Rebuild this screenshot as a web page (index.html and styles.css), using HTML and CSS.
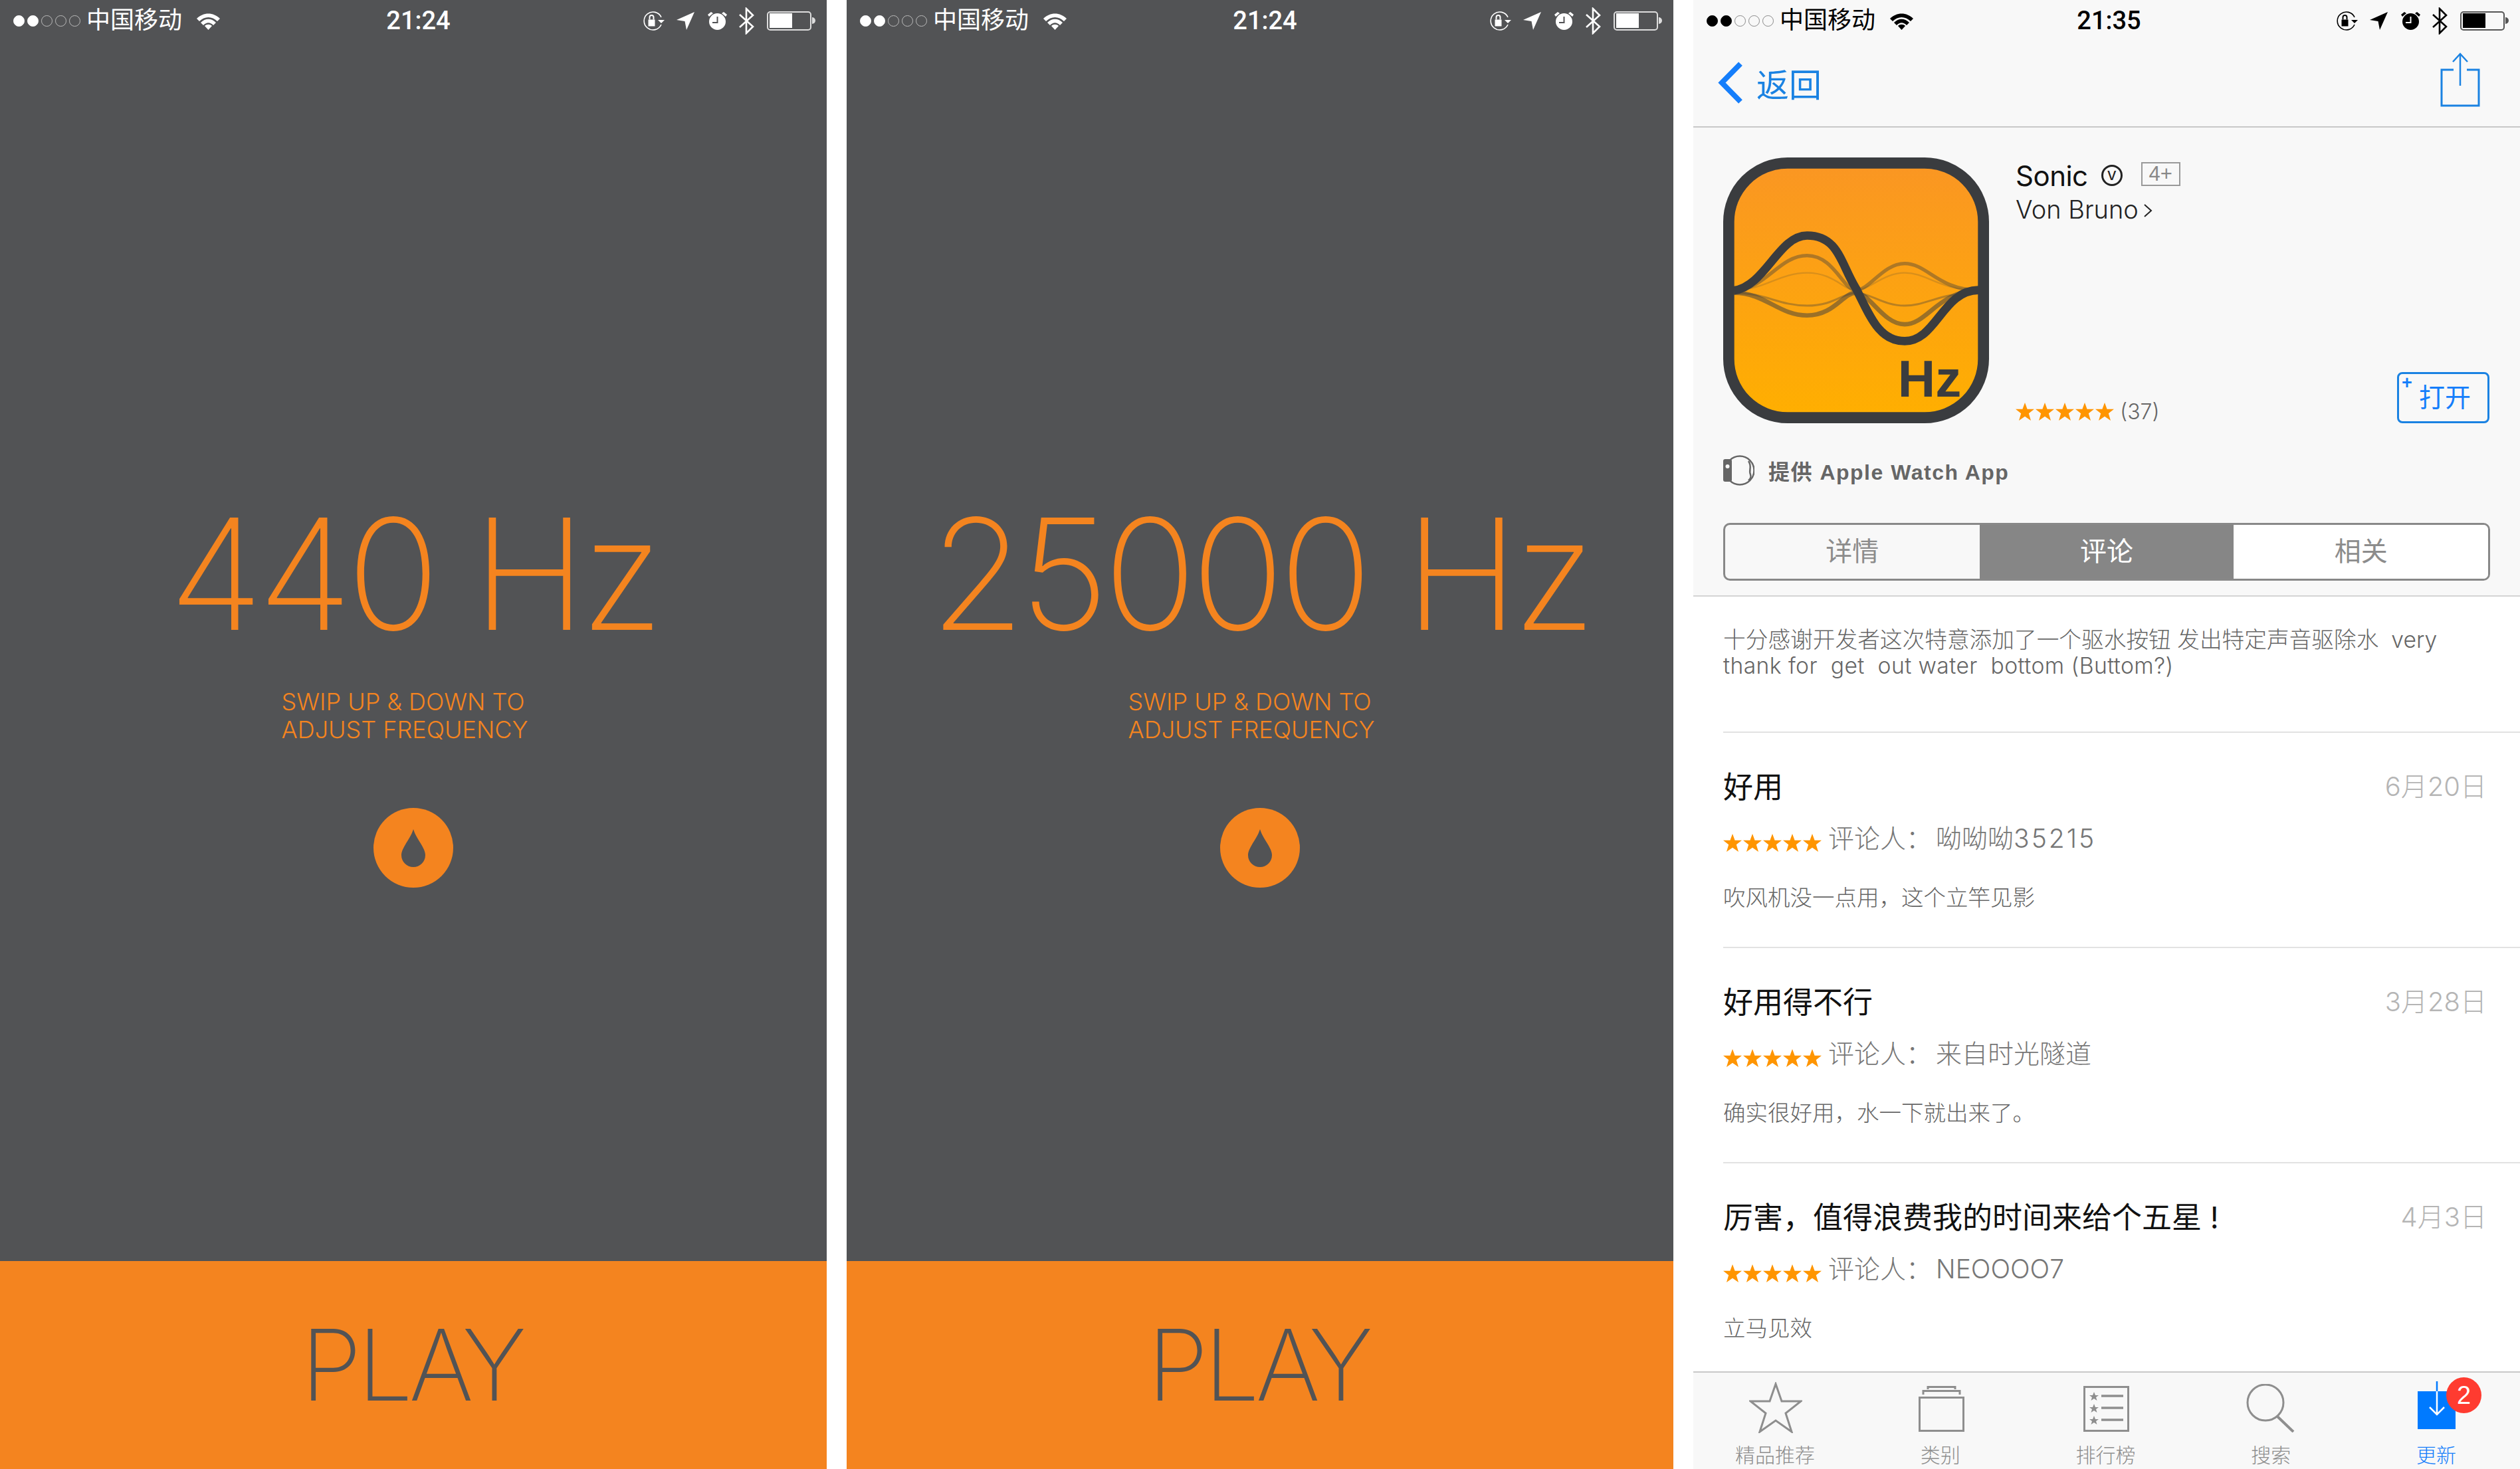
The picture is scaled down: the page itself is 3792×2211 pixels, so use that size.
FILE: index.html
```html
<!DOCTYPE html>
<html lang="zh">
<head>
<meta charset="utf-8">
<title>Sonic</title>
<link rel="stylesheet" href="styles.css">
</head>
<body>
<svg class="sprite" aria-hidden="true">
  <symbol id="wifi" viewBox="0 0 39 27">
    <path class="wifi-arc" d="M2 10C12 0 27 0 37 10L33 14C25 6 14 6 6 14Z"/>
    <path class="wifi-arc" d="M8 16C15 9 24 9 31 16L27 20C22 15 17 15 12 20Z"/>
    <path d="M14 21C17 18 22 18 25 21L19.500 27Z"/>
  </symbol>
  <symbol id="rot" viewBox="0 0 34 30">
    <path d="M29 21A13.500 13.500 0 1 1 29 10" fill="none" stroke="currentColor" stroke-width="1.600"/>
    <path d="M9.500 13.500h10v10h-10z"/>
    <path d="M11.500 13.500V10a3 3 0 0 1 6 0v3.500" fill="none" stroke="currentColor" stroke-width="2"/>
    <path d="M24 14h10l-5 5z"/>
  </symbol>
  <symbol id="loc" viewBox="0 0 27 27">
    <path d="M27 0L15 27L12.500 14L0 12Z"/>
  </symbol>
  <symbol id="alarm" viewBox="0 0 29 27">
    <path fill-rule="evenodd" d="M14.500 2a12.500 12.500 0 1 1 0 25a12.500 12.500 0 0 1 0-25ZM13.500 7v8H7v2h8.500V7Z"/>
    <path d="M0 4L5 0L8 2L2 7ZM29 4L24 0L21 2L27 7Z"/>
  </symbol>
  <symbol id="bt" viewBox="0 0 23 41">
    <path d="M1 11L21 29L11 39V2L21 12L1 30" fill="none" stroke="currentColor" stroke-width="2.600"/>
  </symbol>
  <symbol id="star" viewBox="0 0 28 28">
    <path d="M14 0L17.600 9.700H28L19.800 16.300L23 27L14 20.800L5 27L8.200 16.300L0 9.700H10.400Z"/>
  </symbol>
</svg>

<main class="screens">
  <section class="screen sonic">
    <header class="status">
      <div class="status-left">
        <span class="signal"><i class="on"></i><i class="on"></i><i></i><i></i><i></i></span>
        <span class="carrier">中国移动</span>
        <svg class="ic-wifi"><use href="#wifi"/></svg>
      </div>
      <div class="clock">21:24</div>
      <div class="status-right">
        <svg class="ic-rot"><use href="#rot"/></svg>
        <svg class="ic-loc"><use href="#loc"/></svg>
        <svg class="ic-alarm"><use href="#alarm"/></svg>
        <svg class="ic-bt"><use href="#bt"/></svg>
        <span class="battery"><span class="level"></span></span><span class="nub"></span>
      </div>
    </header>
    <div class="sonic-body">
      <div class="freq">440 Hz</div>
      <p class="hint">SWIP UP &amp; DOWN TO<br>ADJUST FREQUENCY</p>
      <div class="drop-btn"><svg viewBox="0 0 36 57"><path d="M18 0C22 14 36 28 36 39A18 18 0 0 1 0 39C0 28 14 14 18 0Z"/></svg></div>
    </div>
    <div class="play">PLAY</div>
  </section>

  <section class="screen sonic">
    <header class="status">
      <div class="status-left">
        <span class="signal"><i class="on"></i><i class="on"></i><i></i><i></i><i></i></span>
        <span class="carrier">中国移动</span>
        <svg class="ic-wifi"><use href="#wifi"/></svg>
      </div>
      <div class="clock">21:24</div>
      <div class="status-right">
        <svg class="ic-rot"><use href="#rot"/></svg>
        <svg class="ic-loc"><use href="#loc"/></svg>
        <svg class="ic-alarm"><use href="#alarm"/></svg>
        <svg class="ic-bt"><use href="#bt"/></svg>
        <span class="battery"><span class="level"></span></span><span class="nub"></span>
      </div>
    </header>
    <div class="sonic-body">
      <div class="freq">25000 Hz</div>
      <p class="hint">SWIP UP &amp; DOWN TO<br>ADJUST FREQUENCY</p>
      <div class="drop-btn"><svg viewBox="0 0 36 57"><path d="M18 0C22 14 36 28 36 39A18 18 0 0 1 0 39C0 28 14 14 18 0Z"/></svg></div>
    </div>
    <div class="play">PLAY</div>
  </section>

  <section class="screen store">
    <div class="store-head">
      <header class="status dark">
        <div class="status-left">
          <span class="signal"><i class="on"></i><i class="on"></i><i></i><i></i><i></i></span>
          <span class="carrier">中国移动</span>
          <svg class="ic-wifi"><use href="#wifi"/></svg>
        </div>
        <div class="clock">21:35</div>
        <div class="status-right">
          <svg class="ic-rot"><use href="#rot"/></svg>
          <svg class="ic-loc"><use href="#loc"/></svg>
          <svg class="ic-alarm"><use href="#alarm"/></svg>
          <svg class="ic-bt"><use href="#bt"/></svg>
          <span class="battery"><span class="level"></span></span><span class="nub"></span>
        </div>
      </header>
      <nav class="navbar">
        <div class="back">
          <svg class="back-chev" viewBox="0 0 40 63"><path d="M34 3L6 31.500L34 60" fill="none" stroke="currentColor" stroke-width="8"/></svg>
          <span>返回</span>
        </div>
        <svg class="share" viewBox="0 0 60 82"><path d="M20 26H2V80H58V26H40" fill="none" stroke="currentColor" stroke-width="3"/><path d="M30 50V2M19 14L30 2L41 14" fill="none" stroke="currentColor" stroke-width="2.500"/></svg>
      </nav>
      <div class="app-info">
        <svg class="app-icon" viewBox="0 0 1198 1198">
          <defs><linearGradient id="ag" x1="0" y1="0" x2="0" y2="1"><stop offset="0" stop-color="#fa9623"/><stop offset="1" stop-color="#ffaf00"/></linearGradient>
          <clipPath id="ac"><rect x="25" y="25" width="1148" height="1148" rx="265"/></clipPath></defs>
          <rect x="25" y="25" width="1148" height="1148" rx="265" fill="url(#ag)" stroke="#3a3c3f" stroke-width="50"/>
          <g fill="none" stroke="#3a3c3f" clip-path="url(#ac)">
            <path d="M48 598C190 598 250 442 378 442C500 442 540 598 598 598C660 598 720 478 818 478C920 478 970 598 1150 598" stroke-width="16" opacity=".4"/>
            <path d="M48 598C190 598 250 520 378 520C500 520 540 598 598 598C660 598 720 520 818 520C920 520 970 598 1150 598" stroke-width="7" opacity=".18"/>
            <path d="M48 610C190 610 250 712 378 712C500 712 540 610 598 610C660 610 720 752 818 752C920 752 970 600 1150 600" stroke-width="20" opacity=".5"/>
            <path d="M48 610C190 610 250 668 378 668C500 668 540 610 598 610C660 610 720 668 818 668C920 668 970 610 1150 610" stroke-width="9" opacity=".35"/>
            <path d="M48 600C190 580 250 352 378 352C520 352 530 480 598 590C660 710 700 828 818 828C960 828 990 598 1150 598" stroke-width="38"/>
          </g>
          <text class="hz-mark" x="787" y="1078">Hz</text>
        </svg>
        <div class="app-meta">
          <div class="app-title"><span class="app-name">Sonic</span><span class="vbadge">v</span><span class="agebox">4+</span></div>
          <div class="app-dev">Von Bruno<svg class="dev-chev" viewBox="0 0 13 20"><path d="M1 1L11 10L1 19" fill="none" stroke="currentColor" stroke-width="2"/></svg></div>
          <div class="app-rate">
            <span class="stars"><svg><use href="#star"/></svg><svg><use href="#star"/></svg><svg><use href="#star"/></svg><svg><use href="#star"/></svg><svg><use href="#star"/></svg></span>
            <span class="count">(37)</span>
          </div>
        </div>
        <div class="open-btn"><span class="plus">+</span>打开</div>
      </div>
      <div class="watch-row">
        <svg class="watch" viewBox="0 0 47 48"><circle cx="25" cy="24" r="21.500" fill="none" stroke="currentColor" stroke-width="2.500"/><rect y="7" width="13" height="34" rx="3"/><circle cx="6.500" cy="18" r="3" fill="#f8f8f8"/><path d="M38 10C44 18 38 24 41 30C42 33 42 36 38 39" fill="none" stroke="currentColor" stroke-width="2.500"/></svg>
        <span>提供 Apple Watch App</span>
      </div>
      <div class="segments">
        <div class="seg">详情</div>
        <div class="seg active">评论</div>
        <div class="seg plain">相关</div>
      </div>
    </div>
    <div class="store-scroll">
      <p class="desc">十分感谢开发者这次特意添加了一个驱水按钮 发出特定声音驱除水  very
<span class="desc-latin">thank for  get  out water  bottom (Buttom?)</span></p>
      <article class="review">
        <div class="rv-head"><h3>好用</h3><time>6月20日</time></div>
        <div class="rv-by">
          <span class="stars"><svg><use href="#star"/></svg><svg><use href="#star"/></svg><svg><use href="#star"/></svg><svg><use href="#star"/></svg><svg><use href="#star"/></svg></span>
          <span class="rv-name">评论人：<b>呦呦呦<em>35215</em></b></span>
        </div>
        <p class="rv-text">吹风机没一点用，这个立竿见影</p>
      </article>
      <article class="review">
        <div class="rv-head"><h3>好用得不行</h3><time>3月28日</time></div>
        <div class="rv-by">
          <span class="stars"><svg><use href="#star"/></svg><svg><use href="#star"/></svg><svg><use href="#star"/></svg><svg><use href="#star"/></svg><svg><use href="#star"/></svg></span>
          <span class="rv-name">评论人：<b>来自时光隧道</b></span>
        </div>
        <p class="rv-text">确实很好用，水一下就出来了。</p>
      </article>
      <article class="review">
        <div class="rv-head"><h3>厉害，值得浪费我的时间来给个五星 !</h3><time>4月3日</time></div>
        <div class="rv-by">
          <span class="stars"><svg><use href="#star"/></svg><svg><use href="#star"/></svg><svg><use href="#star"/></svg><svg><use href="#star"/></svg><svg><use href="#star"/></svg></span>
          <span class="rv-name">评论人：<b>NEOOOO7</b></span>
        </div>
        <p class="rv-text">立马见效</p>
      </article>
    </div>
    <footer class="tabbar">
      <div class="tab">
        <svg class="tab-star" viewBox="0 0 80 77"><path d="M40 3L49 29H78L55 47L64 75L40 58L16 75L25 47L2 29H31Z" fill="none" stroke="currentColor" stroke-width="3"/></svg>
        <span>精品推荐</span>
      </div>
      <div class="tab">
        <svg class="tab-cat" viewBox="0 0 69 69"><path d="M1.500 67.500V17.500H67.500V67.500Z" fill="none" stroke="currentColor" stroke-width="3"/><path d="M7 13V7.500H62V13M14 5V1.500H55V5" fill="none" stroke="currentColor" stroke-width="3"/></svg>
        <span>类别</span>
      </div>
      <div class="tab">
        <svg class="tab-top" viewBox="0 0 69 69"><path d="M1.500 1.500H67.500V67.500H1.500Z" fill="none" stroke="currentColor" stroke-width="3"/><path d="M27 15H60M27 33H60M27 51H60" fill="none" stroke="currentColor" stroke-width="3.500"/><path d="M16 9l2 5h5l-4 3 1.500 5-4.500-3-4.500 3L13 17l-4-3h5ZM16 27l2 5h5l-4 3 1.500 5-4.500-3-4.500 3L13 35l-4-3h5ZM16 45l2 5h5l-4 3 1.500 5-4.500-3-4.500 3L13 53l-4-3h5Z"/></svg>
        <span>排行榜</span>
      </div>
      <div class="tab">
        <svg class="tab-search" viewBox="0 0 73 73"><circle cx="29" cy="28" r="27" fill="none" stroke="currentColor" stroke-width="3"/><path d="M47 49L71 72" fill="none" stroke="currentColor" stroke-width="4"/></svg>
        <span>搜索</span>
      </div>
      <div class="tab current">
        <svg class="tab-upd" viewBox="0 0 57 72"><rect y="15" width="57" height="57" fill="#007aff"/><path d="M29 0V15" fill="none" stroke="#007aff" stroke-width="2.500"/><path d="M29 15V49M18 39L29 50L40 39" fill="none" stroke="#fff" stroke-width="2.500"/></svg>
        <span>更新</span>
        <span class="badge">2</span>
      </div>
    </footer>
  </section>
</main>
</body>
</html>
```
FILE: styles.css
```css
* { box-sizing: border-box; }
html, body { margin: 0; padding: 0; background: #fff; }
body { width: 3792px; height: 2211px; overflow: hidden; font-family: "Liberation Sans", "Noto Sans CJK SC", sans-serif; }
.sprite { display: none; }
.screens { display: flex; gap: 30px; width: 3792px; height: 2211px; }
.screen { flex: 1 1 0; height: 2211px; display: flex; flex-direction: column; min-width: 0; }
.sonic { background: #525355; color: #f4841f; }
.store { background: #fff; }

/* status bar */
.status { display: grid; grid-template-columns: 581px 97px 1fr; align-items: center; height: 62px; color: #fff; flex: none; }
.status-left { display: flex; align-items: center; padding-left: 20px; }
.signal { display: flex; gap: 4px; width: 110px; flex: none; }
.signal i { width: 17px; height: 17px; border-radius: 50%; border: 1.500px solid #bbb; }
.signal i.on { background: currentColor; border-color: currentColor; }
.carrier { font-size: 36px; font-weight: 400; line-height: 60px; width: 164px; flex: none; }
.ic-wifi { width: 39px; height: 27px; fill: currentColor; }
.clock { font-family: Roboto, "Liberation Sans", sans-serif; font-weight: 500; font-size: 38px; line-height: 52px; white-space: nowrap; text-align: center; }
.status-right { display: flex; align-items: center; justify-content: flex-end; padding-right: 17px; height: 60px; }
.status-right svg { fill: currentColor; flex: none; }
.ic-rot { width: 34px; height: 30px; margin-right: 18px; }
.ic-loc { width: 27px; height: 27px; margin-right: 20px; }
.ic-alarm { width: 29px; height: 27px; margin-right: 18px; }
.ic-bt { width: 23px; height: 41px; margin-right: 19px; }
.battery { width: 67px; height: 29px; border: 2px solid #ddd; border-radius: 5px; padding: 1.500px; display: flex; }
.level { width: 34px; background: currentColor; }
.nub { width: 5px; height: 10px; background: #ddd; border-radius: 0 5px 5px 0; margin-left: 1px; }
.dark { color: #000; grid-template-columns: 577px 97px 1fr; }
.dark .signal i { border-color: #888; }
.dark .signal i.on { border-color: #000; }
.dark .wifi-arc:first-child { fill: #aaa; }
.dark .battery { border-color: #555; }
.dark .nub { background: #555; }

/* sonic */
.sonic-body { flex: 1; display: flex; flex-direction: column; align-items: center; }
.freq { font-family: Inter, sans-serif; font-weight: 200; font-size: 232px; line-height: 280px; margin-top: 662px; white-space: nowrap; letter-spacing: -8px; }
.hint { font-family: Inter, sans-serif; font-weight: 300; font-size: 36px; line-height: 42px; margin: 31px 27px 0 0; width: 370px; white-space: nowrap; }
.drop-btn { width: 120px; height: 120px; margin-top: 97px; border-radius: 50%; background: #f4841f; display: flex; align-items: center; justify-content: center; }
.drop-btn svg { width: 36px; height: 57px; fill: #525355; }
.play { flex: none; height: 313px; padding-right: 5px; background: #f4841f; color: #525355; font-family: Inter, sans-serif; font-weight: 200; font-size: 148px; line-height: 313px; text-align: center; letter-spacing: -6px; }

/* store */
.store-head { background: #f8f8f8; flex: none; height: 898px; border-bottom: 2px solid #d4d4d4; display: flex; flex-direction: column; }
.navbar { height: 133px; flex: none; margin-top: -3px; display: flex; align-items: center; justify-content: space-between; padding: 0 60px 0 37px; border-bottom: 2px solid #c8c8c8; color: #1a82e2; }
.back { display: flex; align-items: center; gap: 18px; font-size: 49px; font-weight: 400; }
.back-chev { width: 40px; height: 63px; color: #157efb; }
.share { width: 60px; height: 82px; margin-top: -10px; }
.app-info { display: flex; align-items: stretch; padding: 45px 46px 0 45px; height: 489px; flex: none; position: relative; }
.app-icon { width: 400px; height: 400px; flex: none; }
.hz-mark { font-family: "Liberation Sans", sans-serif; font-weight: 700; font-size: 234px; fill: #3a3c3f; }
.app-meta { margin-left: 40px; flex: 1; display: flex; flex-direction: column; height: 402px; }
.app-title { display: flex; align-items: center; margin-top: 5px; height: 44px; }
.app-name { font-family: Inter, sans-serif; font-size: 42px; color: #111; letter-spacing: -.500px; }
.vbadge { width: 32px; height: 32px; border: 3px solid #222; border-radius: 50%; margin-left: 20px; font-size: 26px; line-height: 22px; text-align: center; color: #222; }
.agebox { width: 59px; height: 36px; border: 2px solid #999; margin-left: 28px; font-size: 31px; line-height: 32px; text-align: center; color: #888; margin-top: -4px; }
.app-dev { font-family: Inter, sans-serif; font-size: 38px; font-weight: 300; color: #222; line-height: 46px; margin-top: 6px; display: flex; align-items: center; }
.dev-chev { width: 13px; height: 20px; margin-left: 8px; margin-top: 4px; }
.app-rate { margin-top: auto; display: flex; align-items: center; gap: 9px; }
.stars { display: inline-flex; gap: 2px; flex: none; }
.stars svg { width: 28px; height: 28px; fill: #ff9500; }
.count { font-family: Inter, sans-serif; font-size: 32px; font-weight: 300; color: #666; }
.open-btn { align-self: flex-end; width: 139px; height: 77px; border: 3px solid #1a82e2; border-radius: 8px; color: #157efb; font-size: 39px; font-weight: 400; line-height: 71px; text-align: center; padding-left: 5px; position: relative; margin-bottom: 44px; }
.plus { position: absolute; left: 4px; top: -22px; font-size: 27px; font-weight: 700; }
.watch-row { display: flex; align-items: center; height: 52px; padding-left: 45px; margin-top: 1px; color: #666; font-weight: 700; font-size: 32px; letter-spacing: 1.500px; flex: none; }
.watch { width: 47px; height: 48px; fill: currentColor; margin-right: 21px; }
.segments { margin: 53px 45px 0 45px; height: 87px; display: flex; border: 3px solid #888; border-radius: 10px; overflow: hidden; flex: none; }
.seg { flex: 1; text-align: center; font-size: 40px; font-weight: 400; color: #8c8c8c; line-height: 81px; }
.seg.active { background: #868686; color: #fff; }
.seg.plain { background: #fff; }

.store-scroll { flex: 1; overflow: hidden; padding-left: 45px; min-height: 0; font-family: Inter, "Noto Sans CJK SC", sans-serif; }
.desc { margin: 0; height: 205px; padding-top: 45px; font-size: 33.700px; line-height: 39px; color: #666; font-weight: 300; white-space: pre; border-bottom: 2px solid #e2e2e2; }
.desc-latin { letter-spacing: .400px; }
.review { height: 324px; padding: 48px 50px 0 0; border-bottom: 2px solid #e2e2e2; }
.review:last-child { border-bottom: 0; }
.rv-head { display: flex; justify-content: space-between; align-items: center; height: 60px; }
.rv-head h3 { margin: 0; font-size: 45px; font-weight: 400; color: #111; }
.rv-head time { font-size: 40px; color: #b5b5b5; font-weight: 300; }
.rv-by { display: flex; align-items: flex-start; gap: 10px; margin-top: 19px; font-size: 39px; color: #777; font-weight: 300; line-height: 50px; height: 60px; }
.rv-by .stars { margin-top: 25px; }
.rv-name { margin-top: 7px; }
.rv-by b { font-weight: 300; margin-left: 6px; }
.rv-by em { font-style: normal; letter-spacing: 3px; }
.rv-text { margin: 39px 0 0; font-size: 33.500px; font-weight: 300; color: #666; line-height: 44px; }

.tabbar { flex: none; height: 147px; background: #f8f8f8; border-top: 2px solid #c8c8c8; display: grid; grid-template-columns: repeat(5, 1fr); color: #8e8e8e; }
.tab { display: flex; flex-direction: column; align-items: center; position: relative; }
.tab svg { flex: none; display: block; fill: currentColor; }
.tab > span:not(.badge) { position: absolute; left: -3px; right: 0; top: 105px; text-align: center; font-size: 30px; line-height: 40px; font-weight: 300; }
.tab-star { width: 80px; height: 77px; margin-top: 14px; }
.tab-cat { width: 69px; height: 69px; margin-top: 20px; }
.tab-top { width: 69px; height: 69px; margin-top: 20px; }
.tab-search { width: 73px; height: 73px; margin-top: 17px; margin-left: -4px; }
.tab-upd { width: 57px; height: 72px; margin-top: 13px; margin-left: -2px; }
.current { color: #157efb; }
.badge { position: absolute; left: 138px; top: 7px; width: 53px; height: 54px; border-radius: 50%; background: #ff3b30; color: #fff; font-size: 38px; line-height: 54px; text-align: center; }
```
